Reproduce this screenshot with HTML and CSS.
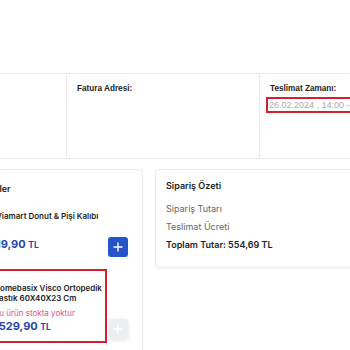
FILE: index.html
```html
<!DOCTYPE html>
<html>
<head>
    <meta name="viewport" content="width=device-width, initial-scale=1.0">
    <link rel="stylesheet" href="styles.css">
</head>
<body>
    <div class="page">
        <div class="info">
            <div class="info-cell">
                <div class="info-label">Teslimat Adresi:</div>
            </div>
            <div class="info-cell">
                <div class="info-label">Fatura Adresi:</div>
            </div>
            <div class="info-cell">
                <div class="info-label">Teslimat Zamanı:</div>
                <div class="time-box">26.02.2024 , 14:00 - 16:00</div>
            </div>
        </div>

        <div class="cards">
            <div class="card products">
                <div class="products-title">Sepetteki Ürünler</div>

                <div class="item">
                    <div class="thumb"></div>
                    <div class="item-info">
                        <div class="item-name">Viamart Donut &amp; Pişi Kalıbı</div>
                        <div class="item-stock"></div>
                        <div class="item-price">19,90 <span>TL</span></div>
                    </div>
                    <button class="add-btn">
                        <svg width="10" height="10" viewBox="0 0 10 10"><path d="M5 1v8M1 5h8" stroke="#fff" stroke-width="1.4" stroke-linecap="round"/></svg>
                    </button>
                </div>

                <div class="item">
                    <div class="thumb"></div>
                    <div class="item-info flagged">
                        <div class="item-name">Homebasix Visco Ortopedik<br>Yastık 60X40X23 Cm</div>
                        <div class="item-stock">Bu ürün stokta yoktur</div>
                        <div class="item-price">1529,90 <span>TL</span></div>
                    </div>
                    <button class="add-btn disabled">
                        <svg width="10" height="10" viewBox="0 0 10 10"><path d="M5 1v8M1 5h8" stroke="#fff" stroke-width="1.4" stroke-linecap="round"/></svg>
                    </button>
                </div>
            </div>

            <div class="card summary">
                <div class="summary-title">Sipariş Özeti</div>
                <div class="summary-row">Sipariş Tutarı</div>
                <div class="summary-row">Teslimat Ücreti</div>
                <div class="summary-row total">Toplam Tutar: 554,69 TL</div>
            </div>
        </div>
    </div>
</body>
</html>
```

FILE: styles.css
```css
body {
    margin: 0;
    overflow: hidden;
    background: #fff;
    font-family: Inter, "Noto Sans", sans-serif;
    color: #222;
}
.page {
    width: 480px;
    margin-left: -80px;
    padding-top: 73px;
}
.info {
    display: grid;
    grid-template-columns: 146px 193px 1fr;
    height: 86px;
    box-sizing: border-box;
    border-top: 1px solid #ececec;
    border-bottom: 1px solid #ececec;
}
.info-cell {
    padding: 10px 10px;
}
.info-cell + .info-cell {
    border-left: 1px solid #ececec;
}
.info-label {
    font-family: "Liberation Sans", Arial, sans-serif;
    font-size: 8.2px;
    font-weight: bold;
    line-height: 10px;
    color: #222;
}
.time-box {
    width: 110px;
    margin: 3px 0 0 -4px;
    padding-left: 1px;
    border: 2px solid #d3202e;
    font-family: "Liberation Sans", Arial, sans-serif;
    font-size: 9px;
    line-height: 12px;
    color: #aaa;
    white-space: nowrap;
}
.cards {
    display: grid;
    grid-template-columns: 223px 1fr;
    gap: 12px;
    margin-top: 10px;
    align-items: start;
}
.card {
    background: #fff;
    border: 1px solid #ececec;
    border-radius: 4px;
    box-shadow: 0 1px 3px rgba(0, 0, 0, 0.04);
}
.products {
    padding: 13px 14px 20px;
}
.products-title {
    font-size: 9px;
    font-weight: 600;
    line-height: 12px;
    margin-bottom: 2px;
}
.item {
    display: flex;
    align-items: flex-end;
}
.item + .item {
    margin-top: 8px;
}
.thumb {
    width: 44px;
    height: 44px;
    margin-right: 12px;
    align-self: center;
    background: #f3f3f3;
}
.item-info {
    flex: 1;
    border: 2px solid transparent;
    padding: 12px 3px 7px;
}
.item-info.flagged {
    border-color: #d3202e;
}
.item-name {
    font-size: 8px;
    font-weight: 600;
    line-height: 10px;
    margin-bottom: 5px;
    white-space: nowrap;
    color: #1d1d1d;
}
.item-stock {
    height: 10px;
    font-size: 8px;
    line-height: 10px;
    color: #e0527f;
}
.item-price {
    margin-top: 1px;
    font-size: 11px;
    font-weight: 700;
    line-height: 14px;
    color: #2447a6;
}
.item-price span {
    font-size: 8.5px;
}
.add-btn {
    width: 20px;
    height: 20px;
    margin: 0 0 4px 2px;
    padding: 0;
    border: none;
    border-radius: 3px;
    background: #2553c8;
    display: flex;
    align-items: center;
    justify-content: center;
    cursor: pointer;
}
.add-btn.disabled {
    background: #eceef1;
    box-shadow: 0 1px 4px rgba(0, 0, 0, 0.12);
    cursor: default;
}
.summary {
    padding: 10px 10px 13px;
}
.summary-title {
    font-size: 9px;
    font-weight: 600;
    line-height: 12px;
    margin-bottom: 8px;
}
.summary-row {
    font-size: 9px;
    line-height: 18px;
    color: #666;
}
.summary-row.total {
    font-weight: 600;
    color: #222;
}
```
